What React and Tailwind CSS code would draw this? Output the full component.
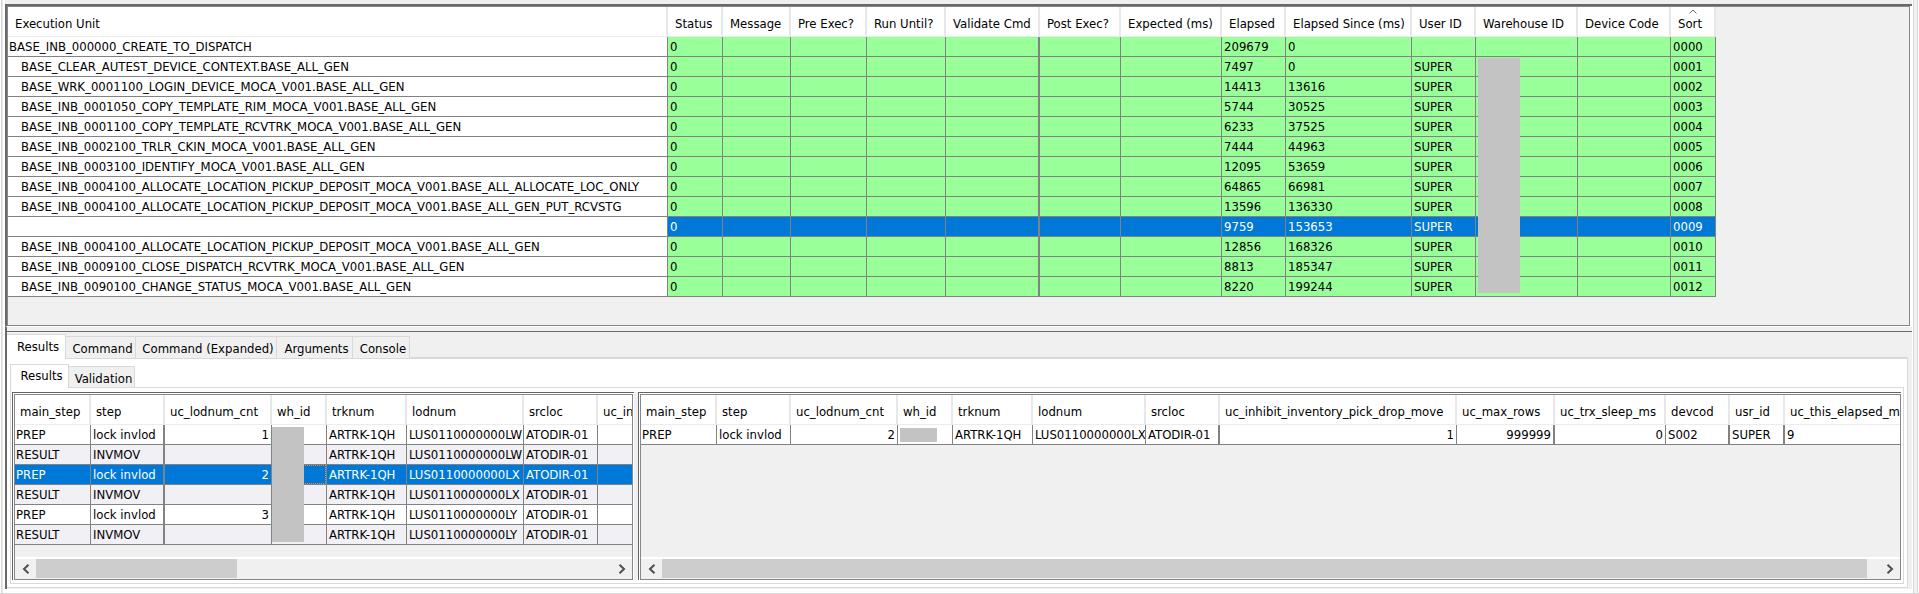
import React from "react";

const executionColumns = [
  { label: "Execution Unit", width: "w-[660px]" },
  { label: "Status", width: "w-[55px]" },
  { label: "Message", width: "w-[68px]" },
  { label: "Pre Exec?", width: "w-[76px]" },
  { label: "Run Until?", width: "w-[79px]" },
  { label: "Validate Cmd", width: "w-[94px]", thick: true },
  { label: "Post Exec?", width: "w-[81px]" },
  { label: "Expected (ms)", width: "w-[101px]" },
  { label: "Elapsed", width: "w-[64px]" },
  { label: "Elapsed Since (ms)", width: "w-[126px]" },
  { label: "User ID", width: "w-[64px]" },
  { label: "Warehouse ID", width: "w-[102px]" },
  { label: "Device Code", width: "w-[93px]" },
  { label: "Sort", width: "w-[45px]", sorted: true },
];

const executionRows = [
  ["BASE_INB_000000_CREATE_TO_DISPATCH", "209679", "0", ""],
  ["BASE_CLEAR_AUTEST_DEVICE_CONTEXT.BASE_ALL_GEN", "7497", "0", "SUPER"],
  ["BASE_WRK_0001100_LOGIN_DEVICE_MOCA_V001.BASE_ALL_GEN", "14413", "13616", "SUPER"],
  ["BASE_INB_0001050_COPY_TEMPLATE_RIM_MOCA_V001.BASE_ALL_GEN", "5744", "30525", "SUPER"],
  ["BASE_INB_0001100_COPY_TEMPLATE_RCVTRK_MOCA_V001.BASE_ALL_GEN", "6233", "37525", "SUPER"],
  ["BASE_INB_0002100_TRLR_CKIN_MOCA_V001.BASE_ALL_GEN", "7444", "44963", "SUPER"],
  ["BASE_INB_0003100_IDENTIFY_MOCA_V001.BASE_ALL_GEN", "12095", "53659", "SUPER"],
  ["BASE_INB_0004100_ALLOCATE_LOCATION_PICKUP_DEPOSIT_MOCA_V001.BASE_ALL_ALLOCATE_LOC_ONLY", "64865", "66981", "SUPER"],
  ["BASE_INB_0004100_ALLOCATE_LOCATION_PICKUP_DEPOSIT_MOCA_V001.BASE_ALL_GEN_PUT_RCVSTG", "13596", "136330", "SUPER"],
  ["", "9759", "153653", "SUPER"],
  ["BASE_INB_0004100_ALLOCATE_LOCATION_PICKUP_DEPOSIT_MOCA_V001.BASE_ALL_GEN", "12856", "168326", "SUPER"],
  ["BASE_INB_0009100_CLOSE_DISPATCH_RCVTRK_MOCA_V001.BASE_ALL_GEN", "8813", "185347", "SUPER"],
  ["BASE_INB_0090100_CHANGE_STATUS_MOCA_V001.BASE_ALL_GEN", "8220", "199244", "SUPER"],
];

const stepColumns = [
  { label: "main_step", width: "w-[76px]" },
  { label: "step", width: "w-[74px]", thick: true },
  { label: "uc_lodnum_cnt", width: "w-[107px]", numeric: true },
  { label: "wh_id", width: "w-[55px]" },
  { label: "trknum", width: "w-[80px]" },
  { label: "lodnum", width: "w-[117px]" },
  { label: "srcloc", width: "w-[74px]" },
  { label: "uc_inhibit_inventory_pick_drop_move", width: "w-[237px]", numeric: true },
];

const stepRows = [
  ["PREP", "lock invlod", "1", "", "ARTRK-1QH", "LUS0110000000LW", "ATODIR-01", ""],
  ["RESULT", "INVMOV", "", "", "ARTRK-1QH", "LUS0110000000LW", "ATODIR-01", ""],
  ["PREP", "lock invlod", "2", "", "ARTRK-1QH", "LUS0110000000LX", "ATODIR-01", ""],
  ["RESULT", "INVMOV", "", "", "ARTRK-1QH", "LUS0110000000LX", "ATODIR-01", ""],
  ["PREP", "lock invlod", "3", "", "ARTRK-1QH", "LUS0110000000LY", "ATODIR-01", ""],
  ["RESULT", "INVMOV", "", "", "ARTRK-1QH", "LUS0110000000LY", "ATODIR-01", ""],
];

const detailColumns = [
  { label: "main_step", width: "w-[76px]" },
  { label: "step", width: "w-[74px]" },
  { label: "uc_lodnum_cnt", width: "w-[107px]", numeric: true },
  { label: "wh_id", width: "w-[55px]" },
  { label: "trknum", width: "w-[80px]" },
  { label: "lodnum", width: "w-[113px]" },
  { label: "srcloc", width: "w-[74px]", thick: true },
  { label: "uc_inhibit_inventory_pick_drop_move", width: "w-[237px]", numeric: true },
  { label: "uc_max_rows", width: "w-[98px]", numeric: true, thick: true },
  { label: "uc_trx_sleep_ms", width: "w-[111px]", numeric: true },
  { label: "devcod", width: "w-[64px]", thick: true },
  { label: "usr_id", width: "w-[55px]", thick: true },
  { label: "uc_this_elapsed_ms", width: "w-[132px]" },
];

const detailRows = [
  ["PREP", "lock invlod", "2", "", "ARTRK-1QH", "LUS0110000000LX", "ATODIR-01", "1", "999999", "0", "S002", "SUPER", "9"],
];

function HeaderRow({ columns, inset }) {
  return (
    <thead>
      <tr className="bg-white">
        {columns.map((column) => (
          <th
            key={column.label}
            scope="col"
            className={`relative h-[30px] overflow-hidden border-r-2 border-b border-r-[#e8e8e8] border-b-[#ececec] pt-1 pr-0 pb-0 text-left font-normal whitespace-nowrap ${inset}`}
          >
            {column.sorted && (
              <svg className="absolute top-[2px] left-[18px] h-[5px] w-2" viewBox="0 0 8 5" fill="none" stroke="#6a6a6a" aria-hidden="true">
                <path d="M0.5 4.5 L4 1 L7.5 4.5" />
              </svg>
            )}
            {column.label}
          </th>
        ))}
      </tr>
    </thead>
  );
}

function Columns({ columns }) {
  return (
    <colgroup>
      {columns.map((column) => (
        <col key={column.label} className={column.width} />
      ))}
    </colgroup>
  );
}

const cellBase = "h-5 overflow-hidden border-b border-[#828282] py-0 leading-[19px] whitespace-nowrap";

function ExecutionTable() {
  return (
    <div className="relative w-[1708px]">
      <table className="w-full table-fixed border-separate border-spacing-0">
        <Columns columns={executionColumns} />
        <HeaderRow columns={executionColumns} inset="pl-[7px]" />
        <tbody>
          {executionRows.map(([unit, elapsed, since, user], index) => {
            const cells = ["0", "", "", "", "", "", "", elapsed, since, user, "", "", String(index).padStart(4, "0")];
            const tone = index === 9 ? "bg-[#0078d7] text-white" : "bg-[#99ff99]";
            return (
              <tr key={index}>
                <td className={`${cellBase} border-r bg-white ${index === 0 ? "pl-px" : "pl-[13px]"}`}>{unit}</td>
                {cells.map((value, cell) => (
                  <td
                    key={cell}
                    className={`${cellBase} ${tone} pl-[2px] ${executionColumns[cell + 1].thick ? "border-r-2" : "border-r"}`}
                  >
                    {value}
                  </td>
                ))}
              </tr>
            );
          })}
        </tbody>
      </table>
      <div className="absolute top-[51px] left-[1470px] h-[235px] w-[42px] bg-[#c3c3c3]" />
    </div>
  );
}

function DataTable({ columns, rows, selected, focused, masked, width }) {
  return (
    <table className={`${width} table-fixed border-separate border-spacing-0`}>
      <Columns columns={columns} />
      <HeaderRow columns={columns} inset="pl-[5px]" />
      <tbody>
        {rows.map((row, index) => {
          const tone =
            index === selected ? "bg-[#0078d7] text-white" : index % 2 ? "bg-[#f0f0f5]" : "bg-white";
          return (
            <tr key={index}>
              {row.map((value, cell) => (
                <td
                  key={cell}
                  className={`${cellBase} ${tone} ${columns[cell].thick ? "border-r-2" : "border-r"} ${
                    columns[cell].numeric ? "pr-[2px] text-right" : "pl-[2px] first:pl-px"
                  }`}
                >
                  {index === selected && cell === focused ? (
                    <div className="-ml-[2px] h-[19px] border border-dotted border-[#ff8728]" />
                  ) : masked && cell === 3 ? (
                    <div className="h-[14px] w-[37px] bg-[#c3c3c3]" />
                  ) : (
                    value
                  )}
                </td>
              ))}
            </tr>
          );
        })}
      </tbody>
    </table>
  );
}

function Chevron({ left }) {
  return (
    <svg className="h-[10px] w-2" viewBox="0 0 8 10" fill="none" stroke="#505050" strokeWidth="2" aria-hidden="true">
      <path d={left ? "M6.5 0.8 L2 5 L6.5 9.2" : "M1.5 0.8 L6 5 L1.5 9.2"} />
    </svg>
  );
}

function ScrollBar({ thumb }) {
  return (
    <div className="flex h-[22px] shrink-0 border-t-2 border-white bg-[#f0f0f0] pb-px">
      <button type="button" aria-label="Scroll left" className="flex w-[21px] items-center justify-center">
        <Chevron left />
      </button>
      <div className="flex-1">
        <div className={`h-full bg-[#cdcdcd] ${thumb}`} />
      </div>
      <button type="button" aria-label="Scroll right" className="flex w-[21px] items-center justify-center">
        <Chevron />
      </button>
    </div>
  );
}

function GridPane({ className, thumb, children }) {
  return (
    <div className={`flex min-w-0 border-t border-l border-[#646464] bg-white pt-px pl-px ${className}`}>
      <div className="flex min-w-0 flex-1 flex-col border border-[#828790] bg-[#f0f0f0]">
        <div className="relative flex-1 overflow-hidden">{children}</div>
        <ScrollBar thumb={thumb} />
      </div>
    </div>
  );
}

function Tab({ label, active, className }) {
  return (
    <button
      type="button"
      role="tab"
      aria-selected={active}
      className={`border-[#d9d9d9] pl-1 text-center whitespace-nowrap ${
        active ? "border-t border-r bg-white pb-[2px]" : "border-t border-r border-b bg-[#f0f0f0] pt-[2px]"
      } ${className}`}
    >
      {label}
    </button>
  );
}

export default function App() {
  return (
    <div className="flex h-screen overflow-hidden border-b border-[#d9d9d9] bg-white font-['DejaVu_Sans_Condensed','Noto_Sans',sans-serif] text-[13px] leading-[19px] text-black">
      <div className="w-[5px] shrink-0 bg-white pl-px">
        <div className="h-full w-[2px] border-x border-x-[#d9d9d9] border-r-[#e8e8e8]" />
      </div>
      <main className="flex min-w-0 flex-1 flex-col bg-[#f0f0f0] pt-1">
        <section className="flex min-h-0 flex-[320_1_0%] border-t-2 border-l-2 border-[#696969] bg-white pr-[2px]">
          <div className="min-w-0 flex-1 overflow-hidden border border-[#828790] bg-[#f0f0f0]">
            <ExecutionTable />
          </div>
        </section>
        <div className="h-[5px] shrink-0 border-t border-l-2 border-t-white border-l-[#696969] bg-[#f0f0f0]" />
        <section className="flex min-h-0 flex-[254_1_0%] flex-col border-t border-l-2 border-[#696969] bg-[#f0f0f0] pt-[2px] pb-px">
          <div role="tablist" className="flex h-[25px] shrink-0 items-end">
            <Tab label="Results" active className="h-[25px] w-[59px]" />
            <Tab label="Command" className="h-[23px] w-[70px]" />
            <Tab label="Command (Expanded)" className="h-[23px] w-[141px]" />
            <Tab label="Arguments" className="h-[23px] w-[76px]" />
            <Tab label="Console" className="h-[23px] w-[57px]" />
            <div className="mr-1 h-[2px] flex-1 bg-[#d9d9d9]" />
          </div>
          <div className="mr-1 flex min-h-0 flex-1 flex-col border-r border-b border-[#d9d9d9] bg-white px-[3px] pt-[5px] pb-[3px]">
            <div role="tablist" className="flex h-6 shrink-0 items-end">
              <Tab label="Results" active className="h-6 w-[59px] border-l" />
              <Tab label="Validation" className="h-[22px] w-[66px]" />
              <div className="h-px flex-1 bg-[#d9d9d9]" />
            </div>
            <div className="flex min-h-0 flex-1 border-x border-b border-[#d9d9d9] pt-1 pr-[2px] pb-[3px] pl-px">
              <GridPane className="flex-[619_1_0%] pr-px" thumb="w-[35%]">
                <DataTable columns={stepColumns} rows={stepRows} selected={2} focused={3} width="w-[820px]" />
                <div className="absolute top-8 left-[257px] h-[115px] w-8 bg-[#c3c3c3]" />
              </GridPane>
              <div className="w-1 shrink-0 bg-[#f0f0f0]" />
              <GridPane className="flex-[1261_1_0%]" thumb="w-[99%]">
                <DataTable columns={detailColumns} rows={detailRows} masked width="w-[1276px]" />
              </GridPane>
            </div>
          </div>
        </section>
        <div className="h-1 shrink-0 bg-white" />
      </main>
      <div className="flex w-[7px] shrink-0 bg-white pl-px">
        <div className="w-[5px] border-x border-[#d9d9d9] bg-[#f0f0f0]" />
      </div>
    </div>
  );
}
